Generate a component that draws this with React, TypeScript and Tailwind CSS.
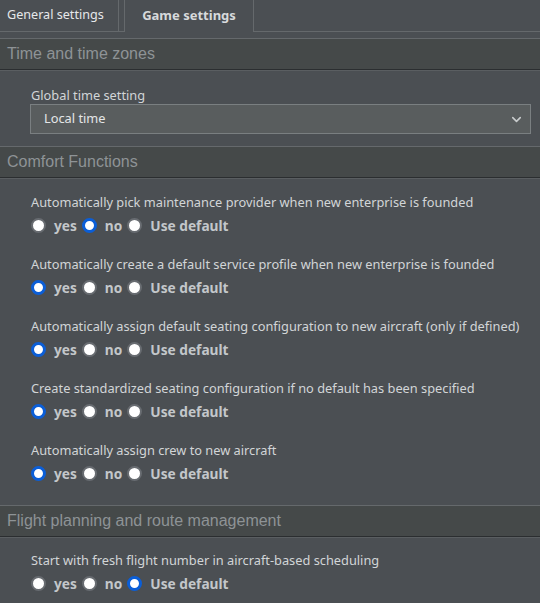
import { ChevronDown } from "lucide-react";

type Choice = "yes" | "no" | "default";

const body = { fontFamily: '"Noto Sans", "Liberation Sans", Arial, sans-serif' };
const heading = { fontFamily: '"Liberation Sans", Arial, sans-serif' };

function Radio({ checked }: { checked: boolean }) {
    return checked ? (
        <span className="inline-block w-[15px] h-[15px] rounded-full bg-white border-[3px] border-[#0b5ed7] shrink-0" />
    ) : (
        <span className="inline-block w-[15px] h-[15px] rounded-full bg-white border-2 border-[#686c71] shrink-0" />
    );
}

function Option({ label, value }: { label: string; value: Choice }) {
    const options: { key: Choice; text: string }[] = [
        { key: "yes", text: "yes" },
        { key: "no", text: "no" },
        { key: "default", text: "Use default" },
    ];
    return (
        <div className="pl-[31px] pb-[11px]">
            <div className="text-[12.8px] leading-[16px] text-[#d2d5d7] pt-[7px]">{label}</div>
            <div className="flex items-center h-[24px] mt-[4px] text-[13.7px] font-bold text-[#c3c7ca]">
                {options.map((o) => (
                    <label key={o.key} className="flex items-center">
                        <Radio checked={o.key === value} />
                        <span className="ml-[8px] mr-[5px]">{o.text}</span>
                    </label>
                ))}
            </div>
        </div>
    );
}

function SectionHeader({ title }: { title: string }) {
    return (
        <div className="border-t border-[#65696c]">
            <div
                className="h-[31px] bg-[#454949] border-b border-[#2b2e30] flex items-center pl-[7px] text-[16px] text-[#8e9396]"
                style={heading}
            >
                {title}
            </div>
            <div className="h-px bg-[#5a5e61]" />
        </div>
    );
}

export default function App() {
    return (
        <div className="w-[540px] h-[603px] overflow-hidden bg-[#4b4f53]" style={body}>
            <div className="flex h-[32px] text-[12.6px]">
                <div className="w-[119px] border-r border-b border-[#65696c] flex items-center pl-[7px] text-[#e6e8ea]">
                    General settings
                </div>
                <div className="w-[5px] border-b border-[#65696c]" />
                <div className="w-[130px] border-l border-r border-[#65696c] flex items-center justify-center font-bold text-[13px] text-[#d7dadc]">
                    Game settings
                </div>
                <div className="flex-1 border-b border-[#65696c]" />
            </div>
            <div className="h-[6px]" />

            <SectionHeader title="Time and time zones" />
            <div className="pl-[30px] pr-[9px] pt-[16px] pb-[12px]">
                <div className="text-[12.8px] leading-[16px] text-[#d2d5d7] pl-px">Global time setting</div>
                <div className="mt-[1px] h-[30px] border border-[#7a7f81] bg-[#595d5e] flex items-center justify-between pl-[13px] pr-[6px] text-[12.8px] text-[#e4e6e7]">
                    <span>Local time</span>
                    <ChevronDown size={15} strokeWidth={2.5} className="text-[#c9cccd]" />
                </div>
            </div>

            <SectionHeader title="Comfort Functions" />
            <div className="pt-[8px] pb-[8px]">
                <Option
                    label="Automatically pick maintenance provider when new enterprise is founded"
                    value="no"
                />
                <Option
                    label="Automatically create a default service profile when new enterprise is founded"
                    value="yes"
                />
                <Option
                    label="Automatically assign default seating configuration to new aircraft (only if defined)"
                    value="yes"
                />
                <Option
                    label="Create standardized seating configuration if no default has been specified"
                    value="yes"
                />
                <Option label="Automatically assign crew to new aircraft" value="yes" />
            </div>

            <SectionHeader title="Flight planning and route management" />
            <div className="pt-[7px]">
                <Option label="Start with fresh flight number in aircraft-based scheduling" value="default" />
            </div>
        </div>
    );
}
